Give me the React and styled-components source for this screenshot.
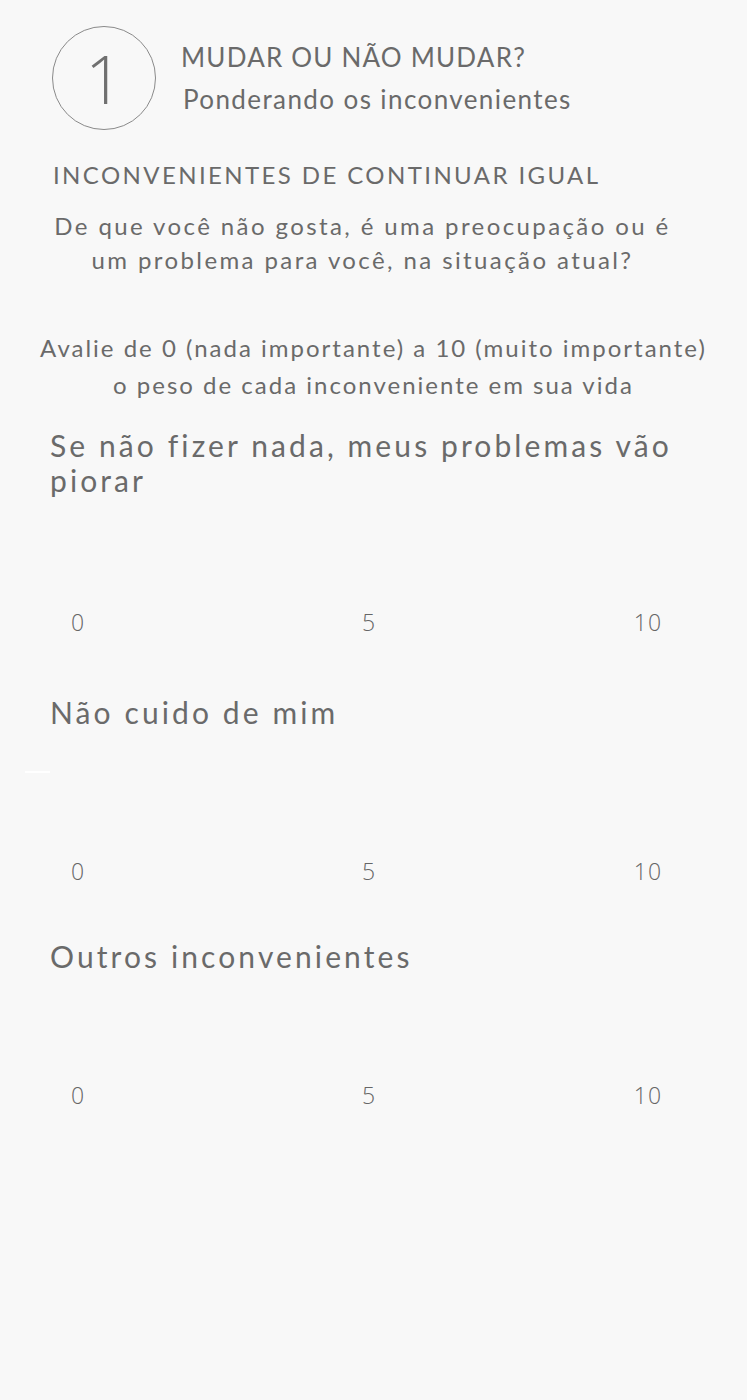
import React from "react";
import styled, { createGlobalStyle } from "styled-components";

const Global = createGlobalStyle`
  html, body { margin: 0; padding: 0; background: #f8f8f8; }
  body { font-family: "Lato", "Noto Sans", sans-serif; font-weight: 400; color: #6a6a6a; }
`;

const Page = styled.div`
  width: 747px;
  min-height: 1400px;
  background: #f8f8f8;
  display: flex;
  flex-direction: column;
`;

const Header = styled.div`
  display: flex;
  align-items: center;
  gap: 25px;
  padding: 26px 0 0 52px;
`;

const StepCircle = styled.div`
  width: 102px;
  height: 102px;
  border: 1px solid #8a8a8a;
  border-radius: 50%;
  display: flex;
  align-items: center;
  justify-content: center;
  font-family: "Open Sans", "Lato", sans-serif;
  font-size: 66px;
  font-weight: 300;
  color: #707070;
  line-height: 1;
`;

const HeaderText = styled.div`
  display: flex;
  flex-direction: column;
  gap: 12px;
`;

const StepTitle = styled.div`
  font-size: 26px;
  line-height: 30px;
  letter-spacing: 1.2px;
`;

const StepSubtitle = styled.div`
  font-size: 26px;
  line-height: 30px;
  letter-spacing: 1.4px;
  padding-left: 2px;
`;

const SectionTitle = styled.h2`
  margin: 30px 0 0 53px;
  font-size: 24px;
  font-weight: 400;
  line-height: 30px;
  letter-spacing: 2.4px;
`;

const Paragraph = styled.p`
  margin: ${(p) => p.$top}px 0 0;
  padding-right: ${(p) => p.$pr || 0}px;
  text-align: center;
  font-size: 24px;
  line-height: ${(p) => p.$lh}px;
  letter-spacing: ${(p) => p.$ls}px;
`;

const Question = styled.div`
  display: flex;
  flex-direction: column;
  margin-top: ${(p) => p.$top}px;
`;

const QuestionTitle = styled.div`
  padding: 0 60px 0 50px;
  font-size: 30px;
  line-height: 35px;
  letter-spacing: 3.1px;
`;

const SliderArea = styled.div`
  height: ${(p) => p.$h}px;
  position: relative;
`;

const SliderMark = styled.div`
  position: absolute;
  left: 25px;
  top: ${(p) => p.$top}px;
  width: 25px;
  height: 2px;
  background: #ffffff;
`;

const Scale = styled.div`
  display: grid;
  grid-template-columns: 40px 1fr 40px;
  padding: 0 79px 0 58px;
  font-family: "Open Sans", "Lato", sans-serif;
  font-weight: 300;
  font-size: 23px;
  line-height: 28px;
  letter-spacing: 1px;
  color: #666666;
`;

const Tick = styled.span`
  text-align: center;
  padding-left: ${(p) => p.$shift || 0}px;
`;

const items = [
  { title: "Se não fizer nada, meus problemas vão piorar", top: 25, gap: 110, mark: null },
  { title: "Não cuido de mim", top: 59, gap: 127, mark: 41 },
  { title: "Outros inconvenientes", top: 54, gap: 107, mark: null },
];

export default function App() {
  return (
    <Page>
      <Global />
      <Header>
        <StepCircle>1</StepCircle>
        <HeaderText>
          <StepTitle>MUDAR OU NÃO MUDAR?</StepTitle>
          <StepSubtitle>Ponderando os inconvenientes</StepSubtitle>
        </HeaderText>
      </Header>
      <SectionTitle>INCONVENIENTES DE CONTINUAR IGUAL</SectionTitle>
      <Paragraph $top={19} $lh={34} $ls={2.4} $pr={22}>
        De que você não gosta, é uma preocupação ou é
        <br />
        um problema para você, na situação atual?
      </Paragraph>
      <Paragraph $top={52} $lh={37} $ls={2}>
        Avalie de 0 (nada importante) a 10 (muito importante)
        <br />
        o peso de cada inconveniente em sua vida
      </Paragraph>
      {items.map((it) => (
        <Question key={it.title} $top={it.top}>
          <QuestionTitle>{it.title}</QuestionTitle>
          <SliderArea $h={it.gap}>
            {it.mark !== null && <SliderMark $top={it.mark} />}
          </SliderArea>
          <Scale>
            <Tick>0</Tick>
            <Tick $shift={12}>5</Tick>
            <Tick>10</Tick>
          </Scale>
        </Question>
      ))}
    </Page>
  );
}
